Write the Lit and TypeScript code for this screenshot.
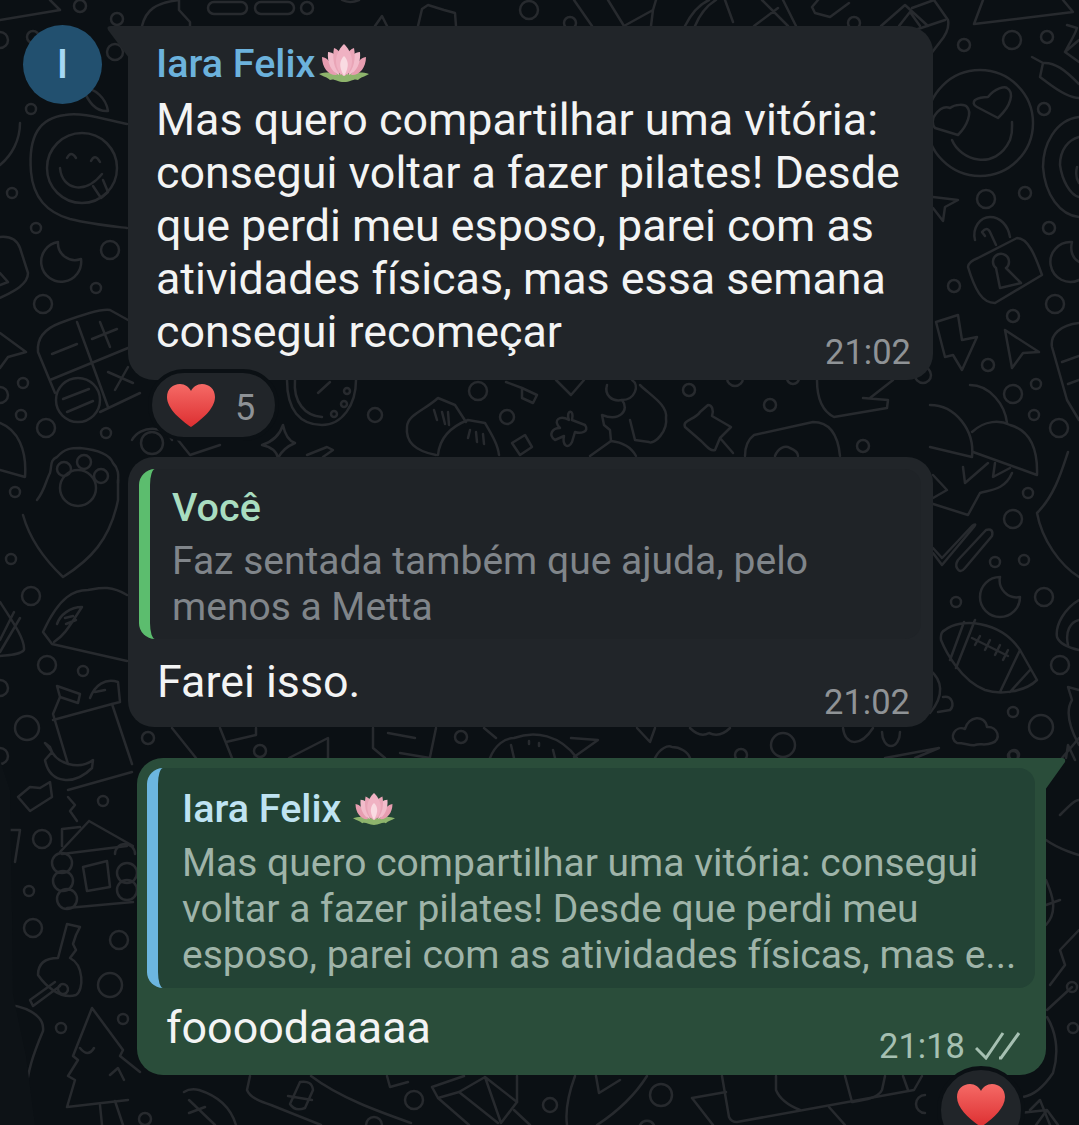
import { LitElement, html, css, svg } from "lit";
import { customElement } from "lit/decorators.js";

// small rings of the wallpaper: x, y, r
const DOTS: number[][] = [
  // top strip and left column
  [80, 6, 6], [117, 19, 6], [115, 52, 8], [33, 37, 6], [31, 109, 5], [307, 8, 6], [529, 10, 9], [570, 23, 6], [854, 23, 6],
  [12, 193, 5], [36, 228, 5], [110, 250, 9], [96, 288, 5], [43, 304, 9], [23, 383, 5], [21, 415, 5], [46, 428, 9],
  [106, 433, 5], [15, 492, 5], [11, 559, 5], [31, 596, 9], [47, 665, 9], [83, 671, 5], [27, 728, 12], [103, 801, 5],
  [42, 839, 9], [29, 891, 5], [33, 928, 9], [119, 940, 9], [110, 985, 12], [123, 1019, 5], [61, 1028, 5],
  [64, 469, 7], [84, 462, 7], [101, 476, 7],
  // right column
  [964, 45, 6], [1012, 40, 9], [1047, 37, 6], [1044, 109, 6], [986, 199, 9], [1025, 193, 6], [1049, 228, 6],
  [954, 286, 6], [1055, 304, 9], [1013, 316, 6], [988, 365, 6], [1036, 384, 5], [1013, 394, 9], [923, 375, 8],
  [1034, 415, 5], [1059, 428, 9], [1028, 493, 5], [1013, 519, 9], [995, 562, 5], [1024, 560, 5], [956, 602, 5],
  [1044, 597, 9], [1060, 665, 9], [1013, 712, 5], [1041, 727, 12], [1013, 756, 5], [1072, 987, 5], [1073, 1028, 5],
  // gaps between bubbles
  [375, 415, 7], [478, 391, 9], [507, 417, 7], [689, 390, 6], [770, 405, 6], [863, 446, 6], [735, 378, 8], [793, 378, 6],
  [347, 391, 3], [344, 404, 3], [334, 414, 3], [148, 738, 6], [260, 751, 6], [461, 737, 6], [741, 755, 6], [783, 745, 12],
  [1014, 755, 5], [152, 443, 11],
  // bottom strip
  [145, 1119, 6], [414, 1100, 9], [550, 1105, 7], [661, 1095, 11],
];

// line doodles of the wallpaper
const DOODLES: string[] = [
  // top strip
  "M0 20 L60 10 L50 0 M0 32 a8 8 0 0 1 0 16",
  "M142 26 C146 10 155 3 179 0 L179 10 L190 22 L190 26",
  "M214 2 H241 a6 6 0 0 1 0 12 H214 a6 6 0 0 1 0 -12 Z M261 2 H288 a6 6 0 0 1 0 12 H261 a6 6 0 0 1 0 -12 Z",
  "M342 0 Q350 4 359 0 M375 26 L382 16 L387 26",
  "M418 26 L422 9 L428 5 L444 10 L455 13 L456 26",
  "M574 0 L592 26 M608 0 L624 26 L653 10 L656 0 M653 10 L651 26",
  "M685 26 C692 12 700 4 709 0 M695 26 C700 14 706 6 716 0 M725 0 L733 22 M754 26 L778 8 M762 0 L788 26 M796 26 L783 0",
  "M812 7 L815 13 L830 17 L849 3 M812 7 L818 0",
  "M881 26 L905 5 L928 26 M899 26 L910 12 L920 26",
  // left column
  "M83 88 C95 88 106 98 108 111 C95 112 88 102 83 88",
  "M20 123 C20 140 12 155 0 165",
  "M127 124 C100 118 80 112 65 115 C40 118 28 135 31 172 C33 195 45 212 70 219 C90 224 110 226 127 228",
  "M117 168 A35 35 0 1 1 47 168 A35 35 0 1 1 117 168",
  "M60 168 C62 190 85 195 102 174 M67 158 Q71 150 76 158 M91 161 Q95 153 100 162 M93 186 L101 198 L108 192 L103 180",
  "M58 242 A20 20 0 1 0 81 259 A17 17 0 0 1 58 242 Z",
  "M0 237 C10 236 17 240 20 248 L28 273 C28 285 12 292 0 298 M0 273 L8 282 L0 285",
  "M0 333 L26 352 L8 357 L0 368 M0 387 a8 8 0 0 1 0 16",
  "M128 320 L110 310 Q100 308 60 323 Q36 332 38 352 L55 393 M77 322 L108 407 M50 380 L128 348 M100 412 L140 393",
  "M52 354 L77 344 M92 339 L117 329 M100 322 L110 347 M108 372 L133 383 M115 390 L128 367",
  "M100 400 A22 22 0 1 1 56 400 A22 22 0 1 1 100 400 M63 399 L89 389 M67 412 L93 401",
  "M0 423 C18 430 27 450 25 477 L0 470",
  "M37 500 C45 490 46 480 50 473 C52 465 50 460 57 457 C65 448 72 448 80 448 C100 450 110 455 113 463 C120 470 118 478 118 483",
  "M60 488 a18 18 0 1 0 36 0 a18 18 0 1 0 -36 0",
  "M23 515 C30 540 45 560 63 577 C90 560 110 540 118 500 L118 480",
  "M0 602 C15 625 25 640 24 650 C20 655 8 655 0 656 M0 640 L14 612 M0 652 L20 618",
  "M127 595 C110 585 100 588 88 590 C75 590 60 595 43 632 L52 644 L127 661",
  "M57 624 C60 615 70 607 82 607 C70 625 65 635 54 642 M65 618 L73 616 M66 624 L76 620",
  "M0 680 a8 8 0 0 1 0 16 M0 748 a8 8 0 0 1 0 16",
  "M57 686 L80 694 L78 703 L60 697 Z M60 697 L53 714 L68 764 M53 720 L112 704 L132 764",
  "M90 698 C95 685 105 678 118 682 L120 702 L112 704 M95 692 L105 690",
  "M45 743 L50 747 C55 765 80 770 93 760 L92 768 C75 785 50 785 45 760 L52 752 Z",
  "M68 790 L132 772",
  "M18 797 L30 787 L40 788 L50 782 L52 797 L30 811 Z",
  "M68 797 L75 805 L70 811 L77 821",
  "M89 821 L60 852 M89 821 L133 846 M62 829 L80 827 M62 829 L62 846",
  "M62 854 L127 846 M67 908 L133 902 M83 867 L107 861 L110 887 L87 891 Z",
  "M72 863 a10 10 0 1 0 -20 0 a10 10 0 1 0 20 0 M73 881 a10 10 0 1 0 -20 0 a10 10 0 1 0 20 0 M77 899 a10 10 0 1 0 -20 0 a10 10 0 1 0 20 0",
  "M135 854 a10 10 0 1 0 -20 0 M137 873 a10 10 0 1 0 -20 0 a10 10 0 0 0 20 0 M137 890 a10 10 0 1 0 -20 0 a10 10 0 0 0 20 0",
  "M10 830 H20 L15 862",
  "M67 924 L80 927 L76 935 L73 944 L76 950 L70 958 C84 965 84 990 76 995 C60 1000 45 985 38 975 C38 960 50 958 58 958 Z",
  "M59 986 a5 5 0 1 0 1 -1 M60 986 L33 1006 L30 1000 L55 982",
  "M0 1004 C25 1005 45 1015 43 1031 C35 1050 25 1075 27 1097",
  "M92 1008 L73 1056 L78 1060 L68 1076 L75 1080 L67 1107 L128 1100 M92 1008 L123 1050 L120 1056 L140 1072",
  "M100 1105 L102 1125 M115 1101 L123 1125 M80 1048 Q88 1058 94 1048 M110 1075 L118 1068 L124 1080",
  // gap under the first bubble
  "M287 380 C287 410 300 425 322 425 C342 425 356 405 356 380 M295 380 C293 402 305 416 322 417 M318 393 L330 382",
  "M283 425 Q286 440 295 443 Q283 448 278 458 Q276 448 262 445 Q278 440 283 425",
  "M132 440 C140 425 165 425 172 440 M178 440 L190 455 L220 445",
  "M307 455 L327 447 L333 450 L323 457",
  "M407 427 C407 415 425 410 438 398 L455 405 L466 422 M407 427 C405 445 420 452 436 455 M434 410 L437 420 M442 412 L445 424 M448 412 L449 425",
  "M438 455 C440 435 455 425 468 420 L485 423 C492 435 498 445 499 455 M470 430 L468 438 M476 432 L477 442 M483 434 L484 444",
  "M506 382 L522 388 L537 395 L533 403 L522 398 L522 388",
  "M512 443 L525 435 L532 447 L520 455 Z",
  "M556 380 L571 395 L584 380",
  "M569 420 C565 410 575 408 572 420 L585 425 C590 432 580 434 575 432 L572 442 C568 450 562 445 564 436 L555 440 C548 435 552 428 560 428 C552 420 560 415 569 420 Z",
  "M607 385 C604 395 612 402 622 400 C630 410 620 422 602 415 L604 425 L610 430 L611 441 L590 456 M640 385 C650 395 668 405 666 418 C668 430 655 445 649 442",
  "M622 400 C635 400 640 385 632 380 M636 456 C630 445 620 442 611 441 M630 420 L635 440 L649 442",
  "M708 405 C712 405 714 410 712 416 L731 427 L720 438 L715 450 C710 452 706 445 700 440 L685 427 C682 420 695 420 700 412 Z M720 438 L733 453",
  "M817 380 C817 395 820 410 834 417 L887 408 L888 400 L863 398 M893 380 L870 398",
  "M745 456 C745 445 750 438 754 435 L813 422 C830 422 838 435 840 456 M775 456 C778 448 785 445 790 448 C795 450 798 452 798 456",
  // right column
  "M983 0 L974 24 L1073 12 L1063 0",
  "M934 0 L948 20 Q950 30 940 42 L930 55 M912 8 L934 0 M915 30 L945 20",
  "M1032 57 L1043 63 L1040 77 L1048 83 C1060 92 1070 98 1079 98 M1043 63 C1055 62 1065 70 1079 84",
  "M1067 25 L1077 28 C1075 35 1070 42 1065 52 L1079 62 M1065 52 L1079 40",
  "M1079 117 C1055 120 1043 145 1043 167 C1045 195 1060 215 1079 217 M1079 137 C1068 140 1060 150 1060 165 C1062 180 1070 195 1079 197 M1077 167 C1075 175 1077 180 1079 183",
  "M1033 123 A53 53 0 1 1 927 123 A53 53 0 1 1 1033 123",
  "M935 115 C940 108 945 106 950 108 C955 104 965 104 967 107 C972 112 968 125 958 135 L935 128 C932 125 932 118 935 115 Z",
  "M975 100 C980 97 985 97 988 97 C995 88 1005 86 1007 88 C1014 92 1012 105 998 118 L977 107 C973 105 973 102 975 100 Z",
  "M952 140 C960 160 995 172 1010 140 C1013 132 1012 128 1012 122",
  "M933 197 L958 200 L945 207 L943 221 L933 208",
  "M975 240 C972 228 980 217 990 217 C1000 217 1008 225 1010 237 M985 236 L982 232 C985 228 988 228 990 232 L996 245",
  "M978 258 L1017 238 C1028 238 1035 255 1042 275 L995 303 C982 303 975 290 968 267 Q968 262 978 258 Z",
  "M1009 262 A8 8 0 1 0 996 268 L1000 288 L1021 283 L1006 268 Q1009 266 1009 262 Z",
  "M1072 242 A20 20 0 1 0 1079 280 M1072 242 C1070 250 1072 258 1079 262",
  "M936 322 L958 315 L962 340 L977 337 L962 370 L953 355 L945 357 Z",
  "M1005 330 L1039 352 L1023 353 L1012 368 Z",
  "M1079 323 C1060 325 1050 335 1052 347 L1067 400 L1079 420 M1062 362 L1079 356 M1068 384 L1079 380",
  "M930 405 C955 405 975 430 972 457 L930 447 M970 385 C990 385 1005 405 1007 423",
  "M972 432 C985 420 1000 420 1010 425 C1028 430 1038 445 1037 475 L973 452",
  "M963 467 L965 483 L988 463 M995 463 L993 477 L1010 468 M1012 473 C1005 490 990 490 980 493 L968 515 L930 503",
  "M933 475 L947 490 L933 498",
  "M933 553 L942 565 L973 528 Q978 522 972 526 L942 558 L933 548 M957 568 Q960 574 965 568 L992 536 Q994 528 986 530 L958 560 Q955 565 957 568",
  "M1000 577 A20 20 0 1 0 1020 597 A17 17 0 0 1 1000 577 Z",
  "M945 630 C960 618 1000 620 1020 650 L1037 680 C1025 692 1000 695 985 690 C960 680 945 650 941 640 Q940 632 945 630 Z M964 622 L950 660 M975 620 L956 668 M1020 650 L1000 692 M1030 670 L1010 692",
  "M972 638 L1008 656 M980 636 L975 645 M990 640 L985 650 M1000 645 L995 655 M1008 650 L1003 660",
  "M957 743 C948 738 955 725 965 729 C968 716 985 714 987 727 C998 726 1002 740 992 743 C985 746 980 743 975 745 C970 746 965 743 957 743 Z",
  "M1068 452 C1062 470 1055 495 1037 513 C1042 540 1060 565 1079 577",
  "M1079 600 C1065 608 1055 625 1057 637 C1060 645 1070 648 1079 650",
  "M1079 620 C1070 622 1065 632 1068 645",
  "M930 670 C942 680 945 695 930 713 M943 697 C952 695 955 705 950 710 L938 712",
  "M1079 690 L1068 687 L1072 700 C1066 710 1068 725 1079 745",
  "M1062 758 L1079 738 M1066 758 L1068 745 L1075 760",
  "M1047 1010 L1072 987 M1047 1017 C1055 1030 1060 1050 1053 1073 C1045 1085 1035 1095 1023 1097",
  "M1020 1113 L1047 1110 L1058 1125 M1047 1110 L1036 1125",
  "M1046 840 C1060 850 1079 855 1079 855 M1060 815 C1070 805 1075 800 1079 800",
  "M1060 900 L1046 905 M1046 925 C1060 910 1050 890 1046 880 M1079 930 L1060 950 L1065 965 L1050 985",
  // gap under the second bubble
  "M172 728 L196 758 M220 728 L232 758 M256 728 L256 735 L226 742",
  "M289 758 L328 738 L328 758",
  "M373 728 L373 748 L385 758 M436 728 L430 757 M388 733 L415 738 M400 753 L430 758",
  "M484 728 L496 738 M490 758 C495 745 505 738 514 738 C535 730 560 735 577 758 M529 741 v3 M539 743 v3 M511 745 L514 758 M553 750 L555 758",
  "M571 738 L598 740 L574 757",
  "M637 728 L650 742 L655 728 M655 758 C660 748 668 745 672 747 C680 747 688 752 690 758 M690 728 Q700 738 709 733 Q720 738 730 728",
  "M843 728 C845 745 860 748 873 728 M882 732 a9 14 0 0 0 18 0 M885 758 L939 748 L915 758",
  // bottom strip
  "M184 1092 Q190 1088 199 1090 C215 1095 230 1105 236 1125 M189 1100 L215 1125 M189 1113 L205 1107",
  "M250 1076 L247 1090 C250 1098 262 1102 271 1105 L321 1125",
  "M300 1082 Q312 1080 313 1090 L305 1108 Q295 1112 290 1104 Z M288 1096 L312 1100",
  "M311 1076 C340 1098 380 1112 411 1123 M366 1125 a8 8 0 0 1 16 0",
  "M387 1076 L390 1087 L408 1082",
  "M432 1087 L464 1076 M438 1098 L432 1087 M438 1098 L459 1092 L485 1077 L517 1102 M459 1092 L498 1123 M485 1077 L501 1123 M517 1102 L501 1123 M438 1098 L469 1125",
  "M517 1076 L517 1102 M514 1110 L530 1125",
  "M575 1076 C568 1095 565 1110 567 1125 M647 1076 C635 1095 620 1110 597 1125 M596 1076 L599 1093 L620 1080 M640 1125 a8 8 0 0 1 14 0",
  "M692 1098 L726 1092 M722 1076 L729 1117 Q731 1122 737 1122 L914 1090 L922 1076 M692 1098 L713 1125",
  "M776 1076 L776 1090 C780 1100 790 1106 800 1110 M845 1076 L852 1102 M885 1076 L882 1090 C878 1098 865 1100 853 1102 M903 1076 L908 1090 M829 1107 L845 1125",
  "M925 1095 a8 8 0 0 0 0 18 M1030 1110 L1040 1100 L1050 1125",
  "M0 1125 L18 1120",
];

const heart = svg`
  <defs>
    <linearGradient id="hg" x1="0" y1="0" x2="0" y2="1">
      <stop offset="0" stop-color="#f56a66" /><stop offset="1" stop-color="#dd2f31" />
    </linearGradient>
  </defs>
  <path d="M24 43 C14 36 0 25 0 13 C0 5 6 0 13 0 C18 0 22 3 24 7 C26 3 30 0 35 0 C42 0 48 5 48 13 C48 25 34 36 24 43 Z" fill="url(#hg)" />
`;

const lotus = svg`
  <path d="M0 30 C8 27 18 29 25 31 C32 29 42 27 50 30 C45 33 42 33 39 36 C35 34 32 38 25 38 C18 38 15 34 11 36 C8 33 5 33 0 30 Z" fill="#8eb46c" />
  <path d="M3 13 C9 14 11 18 13 22 L18 31 C10 32 3 24 3 13 Z M47 13 C41 14 39 18 37 22 L32 31 C40 32 47 24 47 13 Z" fill="#e79db0" />
  <path d="M9 8 C14 8 18 12 20 16 L20 31 C12 28 8 18 9 8 Z M41 8 C36 8 32 12 30 16 L30 31 C38 28 42 18 41 8 Z" fill="#f2bccb" />
  <path d="M15 4 C18 5 21 8 23 11 L22 31 C15 26 13 14 15 4 Z M35 4 C32 5 29 8 27 11 L28 31 C35 26 37 14 35 4 Z" fill="#e9a5b7" />
  <path d="M25 0 C28 3 33 9 33 17 C33 24 29 31 25 32 C21 31 17 24 17 17 C17 9 22 3 25 0 Z" fill="#f0b2c3" />
  <path d="M25 12 C29 16 31 22 25 32 C19 22 21 16 25 12 Z" fill="#f9dbe2" />
`;

@customElement("app-root")
export class AppRoot extends LitElement {
  static styles = css`
    :host {
      display: block;
      width: 1079px;
      height: 1125px;
      position: relative;
      overflow: hidden;
      background: #0b1014;
      font-family: Roboto, "Noto Sans", sans-serif;
    }

    .wallpaper {
      position: absolute;
      inset: 0;
      fill: none;
      stroke: #272a2e;
      stroke-width: 2.5;
      stroke-linecap: round;
      stroke-linejoin: round;
    }

    .shade {
      fill: #0d1216;
      stroke: none;
    }

    .chat {
      position: relative;
      display: flex;
      flex-direction: column;
      align-items: flex-start;
      padding-top: 26px;
    }

    .row {
      display: flex;
      align-items: flex-start;
    }

    .avatar {
      width: 79px;
      height: 79px;
      margin: -1px 26px 0 23px;
      border-radius: 50%;
      background: #22506f;
      color: #a5d8f5;
      font-size: 40px;
      font-weight: 500;
      display: flex;
      align-items: center;
      justify-content: center;
    }

    .bubble {
      position: relative;
      box-sizing: border-box;
      background: #212529;
      border-radius: 26px;
      color: #f3f4f4;
    }

    .bubble.first {
      width: 805px;
      height: 354px;
      padding: 15px 22px 0 28px;
      border-top-left-radius: 0;
    }

    .bubble.first::before {
      content: "";
      position: absolute;
      left: -21px;
      top: 0;
      width: 22px;
      height: 32px;
      background: #212529;
      clip-path: path("M22 0 L4 0 Q-1 0 1 4 L22 32 Z");
    }

    .bubble.second {
      width: 805px;
      height: 270px;
      margin: 16px 0 0 128px;
      padding: 12px 12px 0 11px;
    }

    .bubble.out {
      width: 909px;
      height: 317px;
      margin: 31px 0 0 137px;
      padding: 10px 11px 0 10px;
      background: #2a4d3a;
      border-top-right-radius: 0;
    }

    .bubble.out::after {
      content: "";
      position: absolute;
      right: -20px;
      top: 0;
      width: 21px;
      height: 32px;
      background: #2a4d3a;
      clip-path: path("M0 0 L17 0 Q21 0 20 4 L0 32 Z");
    }

    .name {
      display: flex;
      align-items: center;
      gap: 4px;
      height: 44px;
      font-size: 39.5px;
      font-weight: 500;
      color: #6cb2dc;
    }

    .lotus {
      width: 50px;
      height: 38px;
    }

    .text {
      margin-top: 8px;
      font-size: 44.8px;
      line-height: 53px;
      white-space: nowrap;
    }

    .last {
      display: flex;
      justify-content: space-between;
      align-items: flex-start;
      font-size: 44.8px;
      line-height: 53px;
    }

    .bubble.second .last {
      padding: 16px 11px 0 18px;
    }

    .bubble.out .last {
      padding: 13px 14px 0 19px;
    }

    .time {
      display: flex;
      align-items: center;
      gap: 10px;
      margin-top: 27px;
      height: 40px;
      font-size: 34.5px;
      line-height: 40px;
      color: #8f9396;
    }

    .bubble.out .time {
      margin-top: 25px;
      color: #a6c0b2;
    }

    .ticks {
      width: 46px;
      height: 28px;
      fill: none;
      stroke: #a6c0b2;
      stroke-width: 3;
    }

    .reply {
      box-sizing: border-box;
      height: 170px;
      padding: 17px 20px 0 22px;
      border-left: 11px solid #5cbd6e;
      border-radius: 16px;
      background: #1f2327;
    }

    .bubble.out .reply {
      height: 220px;
      padding: 19px 20px 0 24px;
      border-left-color: #6cb6e0;
      background: #234335;
    }

    .reply-name {
      height: 44px;
      font-size: 39.5px;
      line-height: 44px;
      font-weight: 500;
      color: #a9ddc0;
    }

    .bubble.out .reply-name {
      display: flex;
      align-items: center;
      gap: 12px;
      color: #bfe3f2;
    }

    .bubble.out .lotus {
      width: 42px;
      height: 36px;
    }

    .reply-text {
      font-size: 39px;
      line-height: 46px;
      margin-top: 8px;
      color: #80858a;
      white-space: nowrap;
    }

    .bubble.out .reply-text {
      margin-top: 9px;
      color: #9fb4a9;
    }

    .reaction {
      position: relative;
      box-sizing: border-box;
      display: flex;
      align-items: center;
      gap: 20px;
      width: 131px;
      height: 72px;
      margin: -11px 0 0 148px;
      padding: 0 0 0 15px;
      border: 4px solid #0b1014;
      border-radius: 36px;
      background: #212529;
      color: #8e9296;
      font-size: 36px;
    }

    .reaction span {
      position: relative;
      top: 3px;
    }

    .heart {
      flex: none;
      width: 48px;
      height: 43px;
    }

    .reaction.mine {
      position: absolute;
      left: 937px;
      top: 1066px;
      width: 88px;
      height: 88px;
      margin: 0;
      padding: 0 0 0 16px;
      border-radius: 50%;
    }

    .reaction.mine .heart {
      align-self: flex-start;
      margin-top: 14px;
    }
  `;

  render() {
    return html`
      <svg class="wallpaper" width="1079" height="1125" viewBox="0 0 1079 1125">
        ${DOTS.map(([x, y, r]) => svg`<circle cx=${x} cy=${y} r=${r} />`)}
        ${DOODLES.map((d) => svg`<path d=${d} />`)}
        <path class="shade" d="M0 760 L10 790 L12 912 L13 994 L26 1056 L35 1125 L0 1125 Z" />
      </svg>

      <div class="chat">
        <div class="row">
          <div class="avatar">I</div>
          <div class="bubble first">
            <div class="name">
              Iara Felix
              <svg class="lotus" viewBox="0 0 50 38">${lotus}</svg>
            </div>
            <div class="text">
              Mas quero compartilhar uma vitória:<br />
              consegui voltar a fazer pilates! Desde<br />
              que perdi meu esposo, parei com as<br />
              atividades físicas, mas essa semana
            </div>
            <div class="last">
              <span>consegui recomeçar</span>
              <span class="time">21:02</span>
            </div>
          </div>
        </div>

        <div class="reaction">
          <svg class="heart" viewBox="0 0 48 43">${heart}</svg>
          <span>5</span>
        </div>

        <div class="bubble second">
          <div class="reply">
            <div class="reply-name">Você</div>
            <div class="reply-text">
              Faz sentada também que ajuda, pelo<br />
              menos a Metta
            </div>
          </div>
          <div class="last">
            <span>Farei isso.</span>
            <span class="time">21:02</span>
          </div>
        </div>

        <div class="bubble out">
          <div class="reply">
            <div class="reply-name">
              Iara Felix
              <svg class="lotus" viewBox="0 0 50 38">${lotus}</svg>
            </div>
            <div class="reply-text">
              Mas quero compartilhar uma vitória: consegui<br />
              voltar a fazer pilates! Desde que perdi meu<br />
              esposo, parei com as atividades físicas, mas e...
            </div>
          </div>
          <div class="last">
            <span>foooodaaaaa</span>
            <span class="time">
              21:18
              <svg class="ticks" viewBox="0 0 46 28">
                <path d="M1 16 L11 26 L28 1 M24 26 L26 26 L44 1" />
              </svg>
            </span>
          </div>
        </div>
      </div>

      <div class="reaction mine">
        <svg class="heart" viewBox="0 0 48 43">${heart}</svg>
      </div>
    `;
  }
}
